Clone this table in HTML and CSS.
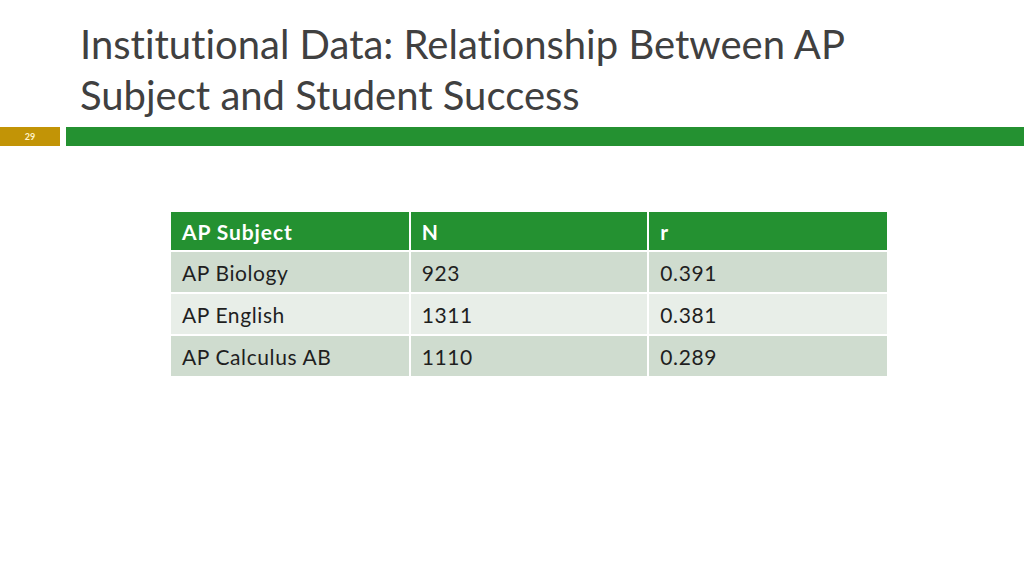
FILE: index.html
```html
<!DOCTYPE html>
<html>
<head>
<meta charset="utf-8">
<link rel="stylesheet" href="styles.css">
</head>
<body>
<div class="slide">
  <h1 class="title">Institutional Data: Relationship Between AP<br>Subject and Student Success</h1>
  <div class="bars">
    <div class="num">29</div>
    <div class="rule"></div>
  </div>
  <div class="content">
    <table class="data">
      <thead>
        <tr><th>AP Subject</th><th>N</th><th>r</th></tr>
      </thead>
      <tbody>
        <tr class="odd"><td>AP Biology</td><td>923</td><td>0.391</td></tr>
        <tr class="even"><td>AP English</td><td>1311</td><td>0.381</td></tr>
        <tr class="odd"><td>AP Calculus AB</td><td>1110</td><td>0.289</td></tr>
      </tbody>
    </table>
  </div>
</div>
</body>
</html>
```
FILE: styles.css
```css
html, body {
  margin: 0;
  padding: 0;
  background: #ffffff;
}
.slide {
  width: 1024px;
  height: 576px;
  overflow: hidden;
  font-family: "Lato", "DejaVu Sans", sans-serif;
  font-variant-ligatures: none;
  color: #404040;
}
.title {
  margin: 0;
  padding: 19px 0 0 80px;
  font-weight: 400;
  font-size: 40px;
  line-height: 51px;
  color: #404040;
  height: 108px;
}
.bars {
  display: flex;
  gap: 6px;
  height: 19px;
}
.num {
  width: 60px;
  background: #c29406;
  color: #fff3c8;
  font-size: 9px;
  font-weight: 700;
  display: flex;
  align-items: center;
  justify-content: center;
}
.rule {
  flex: 1;
  background: #249131;
}
.content {
  padding: 66px 0 0 171px;
}
.data {
  border-collapse: collapse;
  width: 716px;
  table-layout: fixed;
}
.data th, .data td {
  text-align: left;
  padding: 0 0 0 11px;
  font-size: 21px;
  letter-spacing: 0.6px;
  border-left: 2px solid #ffffff;
  border-top: 2px solid #ffffff;
}
.data th:first-child, .data td:first-child { border-left: none; }
.data th {
  background: #249131;
  color: #ffffff;
  font-weight: 700;
  letter-spacing: 0.9px;
  height: 38px;
  border-top: none;
  border-bottom: 2px solid #ffffff;
}
.data td {
  height: 40px;
  color: #1f1f1f;
}
.data tr.odd td { background: #cfdccf; }
.data tr.even td { background: #e8eee8; }
```
